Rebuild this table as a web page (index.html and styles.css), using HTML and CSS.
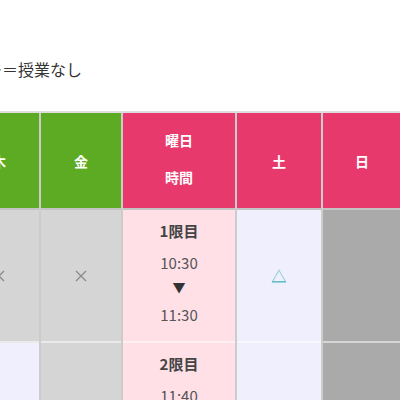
FILE: index.html
```html
<!DOCTYPE html>
<html lang="ja">
<head>
<meta charset="utf-8">
<link rel="stylesheet" href="styles.css">
</head>
<body>
<p class="legend">ー＝授業なし</p>
<div class="timetable">
  <div class="cell head green">木</div>
  <div class="cell head green">金</div>
  <div class="cell head pink time-head"><span>曜日</span><span>時間</span></div>
  <div class="cell head pink">土</div>
  <div class="cell head pink">日</div>

  <div class="cell gray"><svg class="mark" width="12" height="12" viewBox="0 0 12 12"><path d="M1 1L11 11M11 1L1 11" stroke="#8a8a8a" stroke-width="1.3" fill="none"/></svg></div>
  <div class="cell gray"><svg class="mark" width="12" height="12" viewBox="0 0 12 12"><path d="M1 1L11 11M11 1L1 11" stroke="#8a8a8a" stroke-width="1.3" fill="none"/></svg></div>
  <div class="cell lightpink period-cell">
    <div class="period">1限目</div>
    <div class="time">10:30</div>
    <div class="arrow">▼</div>
    <div class="time time-end">11:30</div>
  </div>
  <div class="cell lavender"><svg class="mark" width="16" height="14" viewBox="0 0 16 14"><path d="M8 1.2L14.6 12.6H1.4Z" stroke="#9fd3d8" stroke-width="1.1" fill="none"/><path d="M1 12.8H15" stroke="#5cbcc6" stroke-width="1.4"/></svg></div>
  <div class="cell darkgray"></div>

  <div class="cell lavender"></div>
  <div class="cell gray"></div>
  <div class="cell lightpink period-cell">
    <div class="period">2限目</div>
    <div class="time">11:40</div>
    <div class="arrow">▼</div>
    <div class="time time-end">12:40</div>
  </div>
  <div class="cell lavender"></div>
  <div class="cell darkgray"></div>
</div>
</body>
</html>
```

FILE: styles.css
```css
html, body {
  margin: 0;
  padding: 0;
  background: #ffffff;
  overflow: hidden;
}

body {
  font-family: "Noto Sans CJK JP", "Noto Sans", sans-serif;
  color: #333333;
}

.legend {
  margin: 57px 0 0 -14px;
  font-size: 16px;
  line-height: 24px;
  color: #333333;
  white-space: nowrap;
}

.timetable {
  margin: 30px 0 0 -41px;
  width: 442px;
  display: grid;
  grid-template-columns: 80px 80px 112px 84px 78px;
  grid-template-rows: 97px 133px 133px;
  column-gap: 2px;
  background: #cccccc;
  border-top: 2px solid #dedede;
}

.cell {
  box-sizing: border-box;
  display: flex;
  align-items: center;
  justify-content: center;
  border-bottom: 2px solid rgba(255, 255, 255, 0.5);
}

.head {
  color: #ffffff;
  font-weight: bold;
  font-size: 14px;
  border-bottom: 2px solid #c4c4c4;
}

.time-head {
  flex-direction: column;
  gap: 17px;
  padding-bottom: 4px;
}

.time-head span {
  line-height: 20px;
}

.green { background: #5dab23; }
.pink { background: #e8396d; }
.lightpink { background: #ffe0e7; }
.lavender { background: #efeffd; }
.gray { background: #d5d5d5; }
.darkgray { background: #aaaaaa; }

.period-cell {
  flex-direction: column;
  justify-content: flex-start;
  color: #555555;
}

.period {
  margin-top: 8px;
  font-size: 15px;
  font-weight: bold;
  line-height: 26px;
  color: #444444;
}

.time {
  margin-top: 6px;
  font-size: 15px;
  line-height: 26px;
}

.time-end {
  margin-top: 3px;
}

.arrow {
  font-size: 13px;
  line-height: 24px;
  margin-top: -1px;
  color: #333333;
}

.mark {
  display: block;
}
```
